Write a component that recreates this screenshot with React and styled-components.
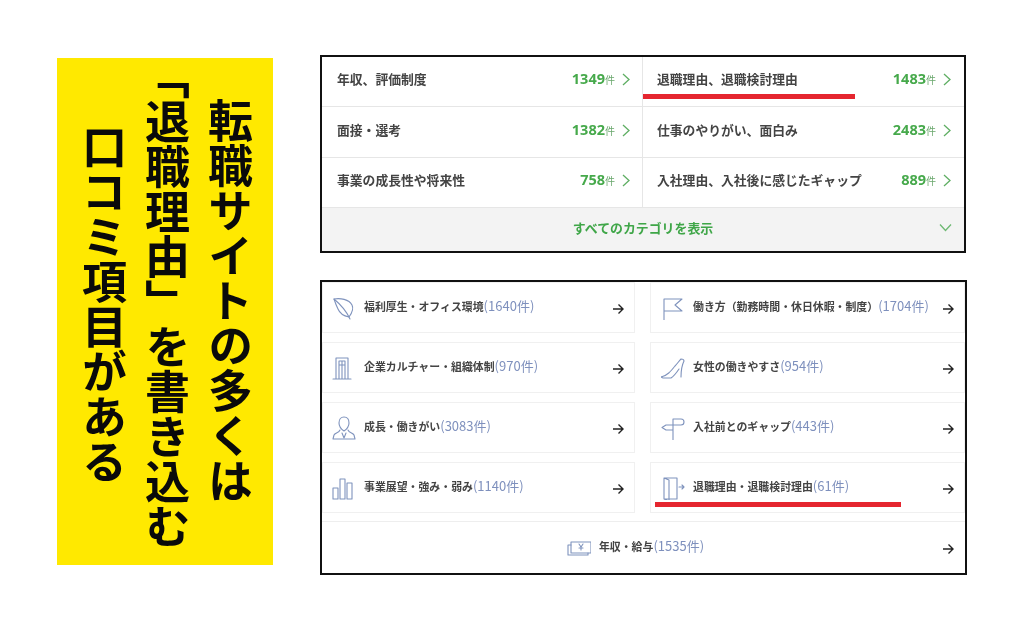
import React from "react";
import styled, { createGlobalStyle } from "styled-components";

const GlobalStyle = createGlobalStyle`
  html, body {
    margin: 0;
    padding: 0;
    background: #fff;
  }
  * {
    box-sizing: border-box;
  }
`;

const Page = styled.div`
  width: 1024px;
  height: 629px;
  overflow: hidden;
  display: flex;
  align-items: flex-start;
  gap: 47px;
  padding: 55px 0 0 57px;
  background: #fff;
  font-family: "Noto Sans CJK JP", "Noto Sans", sans-serif;
`;

const Banner = styled.div`
  width: 216px;
  height: 507px;
  margin-top: 3px;
  padding: 0 11px 0 0;
  background: #ffe900;
  color: #0a0a0a;
  writing-mode: vertical-rl;
  font-size: 45px;
  font-weight: 700;
  line-height: 63px;
  filter: blur(0.4px);
`;

const BannerLine = styled.div`
  margin-inline-start: ${(p) => p.$start}px;
  white-space: nowrap;
`;

const Panels = styled.div`
  display: flex;
  flex-direction: column;
  gap: 27px;
`;

const CategoryPanel = styled.section`
  width: 646px;
  height: 198px;
  border: 2px solid #111;
  background: #fff;
  display: flex;
  flex-direction: column;
`;

const CategoryGrid = styled.div`
  display: grid;
  grid-template-columns: 320px 1fr;
  grid-auto-rows: 50.4px;
`;

const CategoryCell = styled.div`
  position: relative;
  display: flex;
  align-items: center;
  padding: 0 ${(p) => (p.$right ? 13 : 12)}px 6px ${(p) => (p.$right ? 14 : 15)}px;
  border-bottom: 1px solid #e6e6e6;
  border-left: ${(p) => (p.$right ? "1px solid #e6e6e6" : "none")};
  filter: blur(0.3px);
`;

const CategoryName = styled.span`
  flex: 1;
  font-size: 12.8px;
  font-weight: 700;
  color: #444;
  white-space: nowrap;
`;

const CategoryCount = styled.span`
  font-family: "Open Sans", sans-serif;
  font-size: 14.5px;
  font-weight: 700;
  color: #46a94b;
`;

const CountUnit = styled.small`
  font-family: "Noto Sans CJK JP", sans-serif;
  font-size: 10px;
  font-weight: 400;
  color: #6aa86d;
`;

const Chevron = styled.svg`
  width: 8px;
  height: 13px;
  margin: 2px 0 0 7px;
  fill: none;
  stroke: #5fae63;
  stroke-width: 1.3;
`;

const RedLine = styled.div`
  position: absolute;
  left: ${(p) => p.$left}px;
  top: ${(p) => p.$top}px;
  width: ${(p) => p.$width}px;
  height: 5px;
  background: #e5262f;
`;

const ShowAll = styled.div`
  flex: 1;
  position: relative;
  display: flex;
  align-items: center;
  justify-content: center;
  padding-bottom: 4px;
  background: #f3f3f3;
  color: #3fa648;
  font-size: 12.9px;
  font-weight: 700;
  filter: blur(0.3px);
`;

const ShowAllChevron = styled.svg`
  position: absolute;
  right: 12px;
  top: 15px;
  width: 13px;
  height: 9px;
  fill: none;
  stroke: #6db872;
  stroke-width: 1.3;
`;

const ReviewPanel = styled.section`
  width: 647px;
  height: 295px;
  border: 2px solid #111;
  background: #fff;
`;

const ReviewGrid = styled.div`
  display: grid;
  grid-template-columns: 313px 315px;
  column-gap: 15px;
  row-gap: 9px;
  grid-auto-rows: 51px;
`;

const ReviewCard = styled.div`
  position: relative;
  display: flex;
  align-items: center;
  padding: 0 10px 0 ${(p) => (p.$right ? 10 : 9)}px;
  border: 1px solid #f0f0f0;
  filter: blur(0.3px);
`;

const FullRow = styled(ReviewCard)`
  height: 52px;
  margin-top: 8px;
  border: none;
  border-top: 1px solid #eee;
  padding: 0 16px 0 0;
  justify-content: center;
`;

const IconSlot = styled.span`
  flex: none;
  width: 32px;
  height: 24px;
  display: flex;
  align-items: center;
`;

const LineIcon = styled.svg`
  width: 24px;
  height: 24px;
  fill: none;
  stroke: #7f93bd;
  stroke-width: 1.1;
  stroke-linejoin: round;
  stroke-linecap: round;
`;

const ReviewLabel = styled.span`
  flex: ${(p) => (p.$center ? "none" : "1")};
  font-size: 10.9px;
  font-weight: 700;
  color: #444;
  white-space: nowrap;
  margin-top: -4px;
`;

const ReviewCount = styled.span`
  font-size: 13px;
  font-weight: 400;
  color: #7e90bd;
`;

const ArrowIcon = styled.svg`
  flex: none;
  width: 12px;
  height: 12px;
  margin-top: 2px;
  fill: none;
  stroke: #222;
  stroke-width: 1.4;
`;

const FullArrow = styled(ArrowIcon)`
  position: absolute;
  right: 11px;
  top: 19px;
`;

const categories = [
  ["年収、評価制度", "1349", false],
  ["退職理由、退職検討理由", "1483", true],
  ["面接・選考", "1382", false],
  ["仕事のやりがい、面白み", "2483", true],
  ["事業の成長性や将来性", "758", false],
  ["入社理由、入社後に感じたギャップ", "889", true],
];

const icons = {
  leaf: (
    <>
      <path d="M2 3c6-1 15 0 18 6 2 4 0 8-3 12-5-1-9-3-11-8C4 9 3 6 2 3z" />
      <path d="M2 3c6 5 12 11 16 20" />
    </>
  ),
  flag: <path d="M3 24V3h18l-7 6 7 6H3" />,
  building: <path d="M1 23h18M4 23V2h12v21M7 23V5h3v18M10 5h3v18M7 9h6" />,
  heel: (
    <>
      <path d="M0 21c6-1 10-6 14-11 2-2 4-5 6-7 2 0 3 1 3 2-2 4-3 9-3 16" />
      <path d="M0 21l2 1h8c3-2 6-6 8-9" />
    </>
  ),
  person: (
    <>
      <path d="M7 7c0-4 2-6 5-6s5 2 5 6-2 6-5 8c-3-2-5-4-5-8z" />
      <path d="M8 14c-1 3-5 3-6 5l-1 4h22l-1-4c-1-2-5-2-6-5" />
      <path d="M10 17l2 5 2-5" />
    </>
  ),
  sign: <path d="M12 3v21M12 3h8c4 0 4 6 0 6H5l-4 2.5L5 14h7" />,
  chart: <path d="M1 12h5v11H1zM8 3h5v20H8zM15 7h5v16h-5z" />,
  door: <path d="M3 2h13v21H3zM3 2l5 2v21l-5-2M18 11h5M21 9l2 2-2 2" />,
  money: (
    <>
      <path d="M4 6h20v11H4z" />
      <path d="M4 9H1v10h20v-2" />
      <path d="M12 8l2 3 2-3M14 11v3M12 12h4" />
    </>
  ),
};

const reviews = [
  ["leaf", "福利厚生・オフィス環境", "1640"],
  ["flag", "働き方（勤務時間・休日休暇・制度）", "1704"],
  ["building", "企業カルチャー・組織体制", "970"],
  ["heel", "女性の働きやすさ", "954"],
  ["person", "成長・働きがい", "3083"],
  ["sign", "入社前とのギャップ", "443"],
  ["chart", "事業展望・強み・弱み", "1140"],
  ["door", "退職理由・退職検討理由", "61"],
];

function Arrow(props) {
  return (
    <ArrowIcon viewBox="0 0 12 12" {...props}>
      <path d="M1 6h10M6.5 1.5L11 6l-4.5 4.5" />
    </ArrowIcon>
  );
}

export default function App() {
  return (
    <Page>
      <GlobalStyle />
      <Banner>
        <BannerLine $start={40}>転職サイトの多くは</BannerLine>
        <BannerLine $start={-4}>「退職理由」を書き込む</BannerLine>
        <BannerLine $start={66}>口コミ項目がある</BannerLine>
      </Banner>
      <Panels>
        <CategoryPanel>
          <CategoryGrid>
            {categories.map(([name, count, right], i) => (
              <CategoryCell key={name} $right={right}>
                <CategoryName>{name}</CategoryName>
                <CategoryCount>
                  {count}
                  <CountUnit>件</CountUnit>
                </CategoryCount>
                <Chevron viewBox="0 0 8 13">
                  <path d="M1 1l6 5.5-6 5.5" />
                </Chevron>
                {i === 1 && <RedLine $left={0} $top={37} $width={212} />}
              </CategoryCell>
            ))}
          </CategoryGrid>
          <ShowAll>
            すべてのカテゴリを表示
            <ShowAllChevron viewBox="0 0 13 9">
              <path d="M1 1.5l5.5 6 5.5-6" />
            </ShowAllChevron>
          </ShowAll>
        </CategoryPanel>
        <ReviewPanel>
          <ReviewGrid>
            {reviews.map(([icon, name, count], i) => (
              <ReviewCard key={name} $right={i % 2 === 1}>
                <IconSlot>
                  <LineIcon viewBox="0 0 24 24">{icons[icon]}</LineIcon>
                </IconSlot>
                <ReviewLabel>
                  {name}
                  <ReviewCount>({count}件)</ReviewCount>
                </ReviewLabel>
                <Arrow />
                {i === 7 && <RedLine $left={4} $top={39} $width={246} />}
              </ReviewCard>
            ))}
          </ReviewGrid>
          <FullRow>
            <IconSlot>
              <LineIcon viewBox="0 0 24 24">{icons.money}</LineIcon>
            </IconSlot>
            <ReviewLabel $center>
              年収・給与<ReviewCount>(1535件)</ReviewCount>
            </ReviewLabel>
            <FullArrow viewBox="0 0 12 12">
              <path d="M1 6h10M6.5 1.5L11 6l-4.5 4.5" />
            </FullArrow>
          </FullRow>
        </ReviewPanel>
      </Panels>
    </Page>
  );
}
